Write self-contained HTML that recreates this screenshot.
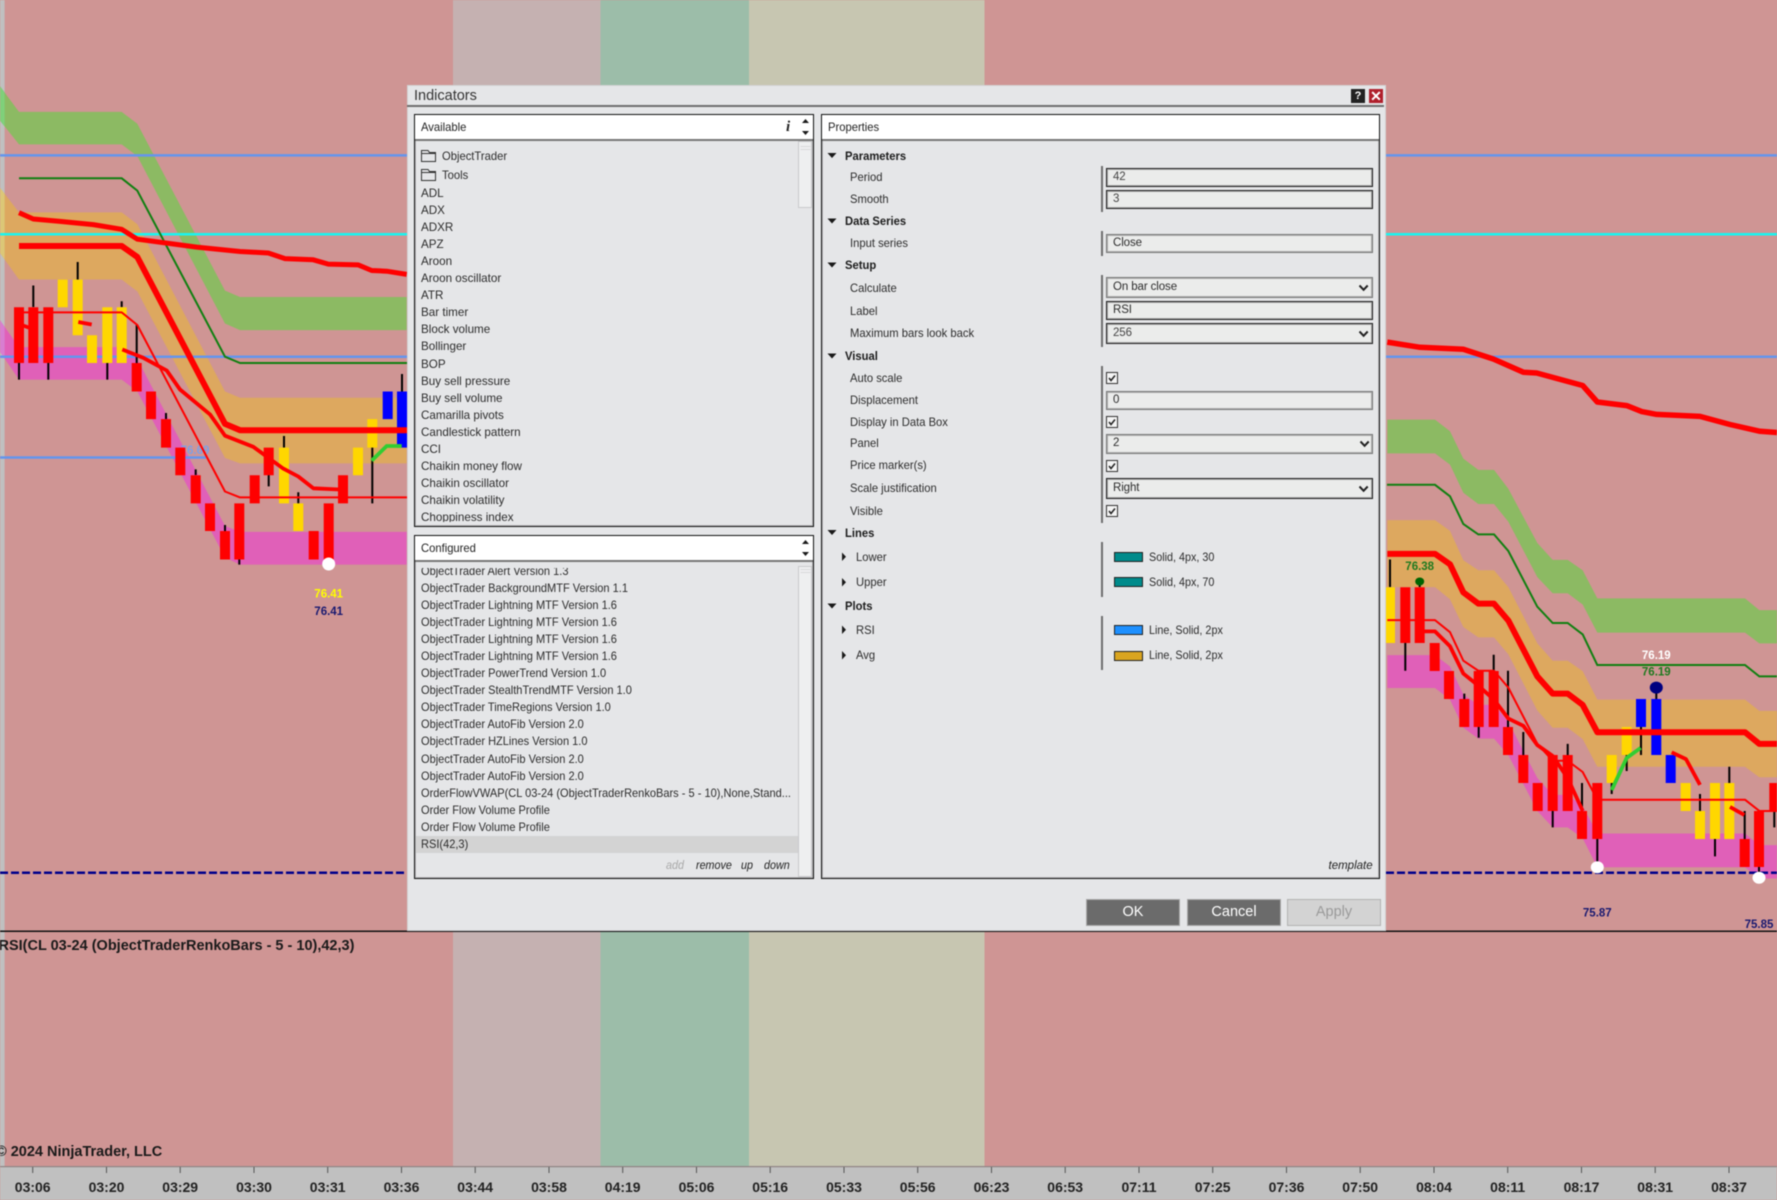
<!DOCTYPE html>
<html lang="en"><head><meta charset="utf-8"><title>Indicators</title>
<style>
html,body{margin:0;padding:0}
body{width:1777px;height:1200px;overflow:hidden;position:relative;background:#cf9594;font-family:"Liberation Sans",sans-serif}
#r{position:absolute;left:0;top:0;width:1777px;height:1200px;filter:blur(.4px)}
svg.c{position:absolute;left:0;top:0}
#d{position:absolute;left:407px;top:85px;width:979px;height:846px;background:#e5e6e8;box-shadow:inset 0 0 0 1px #d2d2d4}
#d *{box-sizing:border-box}
.t{position:absolute;line-height:16px;font-size:12px;color:#2c2c2c;white-space:nowrap;transform:scaleX(.935);transform-origin:0 50%}
.b{font-weight:bold;color:#1c1c1c}
.p{position:absolute;border:1px solid #111;box-shadow:inset 0 0 0 1px rgba(0,0,0,.2)}
.h{position:absolute;left:0;top:0;right:0;height:26px;background:#fff;border-bottom:2px solid #777}
.l{position:absolute;left:14px;font-size:12px;line-height:17.1px;color:#2c2c2c;white-space:nowrap;transform-origin:0 0}
.w{position:absolute;overflow:hidden}
.sb{position:absolute;background:#eeeff0;border:1px solid #c9c9cc}
.i{position:absolute;left:699px;width:267px;background:#ebeceb;border:1px solid #1e1e1e;box-shadow:inset 0 0 0 1px rgba(0,0,0,.28);font-size:11.5px;letter-spacing:-.1px;color:#444;padding-left:6px;white-space:nowrap}
.g{border-color:#777;box-shadow:inset 0 0 0 1px rgba(100,100,100,.45);color:#2c2c2c}
.s{position:absolute;left:694px;width:2px;background:#6e6e6e}
.k{position:absolute;left:707px;top:0;width:29px;height:10px;border:1px solid #222}
.btn{position:absolute;top:814px;height:27px;width:94px;background:#6b6b6b;border:1px solid #a8a8a8;color:#fff;font-size:14.5px;line-height:25px;text-align:center}
.it{font-style:italic;font-size:11.5px}
</style></head><body>
<div id="r">
<svg class="c" width="1777" height="1200" viewBox="0 0 1777 1200">
<rect x="0" y="0" width="1777" height="1167" fill="#cf9594"/>
<rect x="453" y="0" width="147.5" height="1167" fill="#c5b1b1"/>
<rect x="600.5" y="0" width="148.5" height="1167" fill="#9cbda9"/>
<rect x="749" y="0" width="235.5" height="1167" fill="#c7c6b1"/>
<rect x="0" y="0" width="4.6" height="1167" fill="#c0c0c0"/>

<g transform="scale(.33333,.39541)">
<polygon fill="#8cba63" points="0,218 57,283 365,283 412,313 675,735 720,751 1220,751 1220,835 720,835 675,818 412,395 365,365 57,365 0,305"/>
<polygon fill="#7fd07a" points="0,218 14,234 14,320 0,305"/>
<polygon fill="#dda85f" points="0,475 57,537 365,537 412,567 675,990 720,1006 1220,1006 1220,1172 720,1172 675,1158 412,737 365,707 57,707 0,640"/>
<polygon fill="#dcc777" points="0,475 14,490 14,656 0,640"/>
<polygon fill="#e060b8" points="0,810 57,878 365,878 412,908 675,1330 720,1345 1220,1345 1220,1428 720,1428 675,1410 412,990 365,960 57,960 0,890"/>
<polygon fill="#d87ed0" points="0,810 14,827 14,907 0,890"/>
</g>
<g transform="translate(1380,320) scale(.33333,.40177)">
<polygon fill="#8cba63" points="22,248 165,248 210,277 250,345 295,373 342,373 385,420 472,555 518,597 563,597 608,623 652,693 1095,693 1138,722 1191,722 1191,805 1138,805 1095,778 652,778 608,708 563,680 518,680 472,640 385,502 342,458 295,458 250,430 210,360 165,332 22,332"/>
<polygon fill="#dda85f" points="22,498 165,498 210,525 250,598 295,623 342,623 385,665 472,805 518,848 563,848 608,874 652,945 1095,945 1138,973 1191,973 1191,1138 1138,1138 1095,1112 652,1112 608,1043 563,1015 518,1015 472,972 385,832 342,790 295,790 250,764 210,695 165,665 22,665"/>
<polygon fill="#e060b8" points="22,834 165,834 210,862 250,932 295,958 342,958 385,1000 472,1140 518,1182 563,1182 608,1210 652,1278 1095,1278 1138,1307 1191,1307 1191,1390 1138,1390 1095,1362 652,1362 608,1290 563,1263 518,1263 472,1222 385,1083 342,1042 295,1042 250,1015 210,945 165,916 22,916"/>
</g>

<g fill="none">
<path d="M0 155.4H1777M0 356.7H1777M0 457.5H206" stroke="#6495ed" stroke-width="2.5"/>
<path d="M0 234.2H1777" stroke="#19f5f0" stroke-width="2.5"/>
<path d="M0 872.7H1777" stroke="#00008b" stroke-width="2.5" stroke-dasharray="8 3"/>
<path d="M19 178.3H121.7L137.3 190.6 225 356.7 240 363H407" stroke="#118011" stroke-width="2"/>
<path d="M1387 484.8H1435L1450 496.3 1463.3 523.9 1478.3 534.4H1494L1508.3 551 1537.3 606.7 1552.7 623H1567.7L1582.7 634.4 1597.3 665H1745L1759.3 676.4H1777" stroke="#118011" stroke-width="2"/>
</g>
<text x="195" y="454" font-family="'Liberation Sans',sans-serif" font-weight="bold" font-size="11.5" text-anchor="middle" fill="#7f9fe4">76.69</text>

<path fill="none" stroke="#000" stroke-width="2" d="M19 363V379.6M33.3 285.5V307M48.3 363V379.6M77.7 262V279.6M107.3 363V379.6M121.7 301.3V307M136.7 325V363M166 413V419M195.7 469.4V475M225 525V531M239.3 559V564.6M268.7 475V486.4M284 436V447.6M298.3 492.3V503.4M372.3 447V503.4M402 374V391.5M1390 559.5V587M1405.3 643V670.7M1419.7 580V587M1464.3 693.6V699M1478.7 727V737.8M1493.7 654.7V671M1508 670.7V727M1523.3 732V755M1552.7 811V827.4M1567.7 743.9V755M1582 783V811M1597.3 839V862.4M1611.7 783V794M1626.7 755V771M1641 727V755M1656.3 690V699M1700 794V811M1715 839V856.4M1729.3 766.8V783M1744.7 811V839M1759 867V873M1774.3 811V827.4"/>

<path fill="#ff0000" d="M14 307.2h10V363h-10zM28.3 307.2h10V363h-10zM43.3 307.2h10V363h-10zM131.7 363h10v28.5h-10zM146 391.5h10v27.6h-10zM161 419.1h10v28.5h-10zM175.3 447.6h10v27.7h-10zM190.7 475.3h10v28.1h-10zM205 503.4h10V531h-10zM220 531h10v28.5h-10zM234.3 503.4h10v56.1h-10zM249.7 475.3h10v28.1h-10zM263.7 447.6h10v27.7h-10zM308.7 531h10v28.5h-10zM323.7 503.4h10v56.1h-10zM338 475.3h10v28.1h-10zM1400.3 587.2h10V643h-10zM1414.7 587.2h10V643h-10zM1429.7 643h10v28h-10zM1444 671h10v28h-10zM1459.3 699h10v28h-10zM1473.7 671h10v56h-10zM1488.7 671h10v56h-10zM1503 727h10v28h-10zM1518.3 755h10v28h-10zM1532.7 783h10v28h-10zM1547.7 755h10v56h-10zM1562.7 755h10v56h-10zM1577 811h10v28h-10zM1592.3 783h10v56h-10zM1739.7 839h10v28h-10zM1754 811h10v56h-10zM1769.3 783h10v28h-10z"/>
<path fill="#ffd700" d="M57.7 279.6h10v27.6h-10zM72.7 279.6h10v55.7h-10zM87 335.3h10V363h-10zM102.3 307.2h10V363h-10zM116.7 307.2h10V363h-10zM279 447.6h10v55.8h-10zM293.3 503.4h10V531h-10zM353 447.6h10v27.7h-10zM367.3 419.1h10v28.5h-10zM1385 587.2h10V643h-10zM1606.7 755h10v28h-10zM1621.7 727h10v28h-10zM1680.7 783h10v28h-10zM1695 811h10v28h-10zM1710 783h10v56h-10zM1724.3 783h10v56h-10z"/>
<path fill="#0000ff" d="M382.7 391.5h10v27.6h-10zM397 391.5h10v56.1h-10zM1636 699h10v28h-10zM1651.3 699h10v56h-10zM1665.7 755h10v28h-10z"/>

<g fill="none" stroke="#ff0000" stroke-linejoin="round">
<path stroke-width="6" d="M19 246H121.7L137.3 257 225 423.9 240 430.2H407"/>
<path stroke-width="5" d="M19 212.7 33.3 219 60 221.4 93.3 224.6 121.7 229.3 137.3 239.2 196.7 247.1 240 251.5 268.3 253 285 258.6 313.3 259.8 328.3 264.1 358.3 264.9 371.7 270.5 386.7 271.2 406.7 274.4"/>
<path stroke-width="5.5" d="M1387.3 342.1 1420 347.3 1463.3 349.3 1493.3 359 1523.3 372.2 1536.7 373 1582.7 385.5 1597.3 402 1626.7 405.6 1641.7 411.6 1656.7 414.4 1700 416.4 1730 424.5 1760 431.3 1777 432.5"/>
<path stroke-width="2" d="M19 312.4H121.7L137.3 325 225 491.5 240 497.4H407"/>
<path stroke-width="3.8" d="M23 325.5 30 328M78.3 322 91.7 324.5M122.3 349.5 143.3 357.8 166.7 370.5 180 389.5 210 414.4 225 435.7 253.3 446.8 283.3 468.6 298.3 476.5 313.3 488.3 340 489.5"/>
</g>
<g transform="translate(1380,320) scale(.33333,.40177)" fill="none" stroke="#ff0000" stroke-linejoin="round">
<path vector-effect="non-scaling-stroke" stroke-width="6" d="M22 582H165L210 608 250 678 295 706H342L385 748 472 887 518 930H563L608 958 652 1026H1095L1138 1055H1191"/>
<path vector-effect="non-scaling-stroke" stroke-width="2" d="M22 747H165L210 777 250 848 295 873H342L385 915 472 1055 518 1097H563L608 1125 652 1194H1095L1138 1222H1191"/>
<path vector-effect="non-scaling-stroke" stroke-width="3.8" d="M120 775H165L210 812 250 880 295 910 342 945 385 992 430 1010 472 1058 518 1085 563 1140 608 1222M875 1076 918 1093 960 1157M1050 1212 1093 1232"/>
<path vector-effect="non-scaling-stroke" stroke-width="3.8" stroke="#32cd32" d="M695 1170 740 1090 782 1065"/>
</g>
<path fill="none" stroke="#32cd32" stroke-width="3.8" d="M371.7 460.6 386.7 446H401.7"/>

<ellipse cx="328.7" cy="564" rx="6.5" ry="6.5" fill="#fff"/>
<ellipse cx="1597.3" cy="867.2" rx="6.5" ry="6" fill="#fff"/>
<ellipse cx="1759" cy="877.7" rx="6.5" ry="6" fill="#fff"/>
<ellipse cx="1419.7" cy="581.5" rx="4.5" ry="4" fill="#006400"/>
<ellipse cx="1656.3" cy="687.6" rx="6.5" ry="6" fill="#000080"/>

<g font-family="'Liberation Sans',sans-serif" font-weight="bold" font-size="11.5" text-anchor="middle">
<text x="328.7" y="597.5" fill="#ffff00">76.41</text>
<text x="328.7" y="614.8" fill="#191970">76.41</text>
<text x="1419.7" y="570" fill="#1f7a1f">76.38</text>
<text x="1656.3" y="659" fill="#ffffff">76.19</text>
<text x="1656.3" y="675.6" fill="#1f7a1f">76.19</text>
<text x="1597.3" y="916.7" fill="#191970">75.87</text>
<text x="1759" y="928" fill="#191970">75.85</text>
</g>

<rect x="0" y="930.5" width="1777" height="1.5" fill="#111"/>
<g font-family="'Liberation Sans',sans-serif" font-weight="bold" font-size="14.5" fill="#1a1a1a">
<text x="-1.5" y="950">RSI(CL 03-24 (ObjectTraderRenkoBars - 5 - 10),42,3)</text>
<text x="-4" y="1156">© 2024 NinjaTrader, LLC</text>
</g>

<rect x="0" y="1167" width="1777" height="33" fill="#c0c0c0"/>
<rect x="0" y="1166" width="1777" height="1.2" fill="#8f8484"/>
<path stroke="#555" stroke-width="1" d="M32.7 1167v6M106.5 1167v6M180.2 1167v6M254 1167v6M327.7 1167v6M401.5 1167v6M475.2 1167v6M549 1167v6M622.7 1167v6M696.5 1167v6M770.2 1167v6M844 1167v6M917.7 1167v6M991.5 1167v6M1065.2 1167v6M1139 1167v6M1212.7 1167v6M1286.5 1167v6M1360.2 1167v6M1434 1167v6M1507.7 1167v6M1581.5 1167v6M1655.2 1167v6M1729 1167v6"/>
<g font-family="'Liberation Sans',sans-serif" font-weight="bold" font-size="14" fill="#222" text-anchor="middle">
<text x="32.7" y="1192">03:06</text><text x="106.5" y="1192">03:20</text><text x="180.2" y="1192">03:29</text><text x="254" y="1192">03:30</text><text x="327.7" y="1192">03:31</text><text x="401.5" y="1192">03:36</text><text x="475.2" y="1192">03:44</text><text x="549" y="1192">03:58</text><text x="622.7" y="1192">04:19</text><text x="696.5" y="1192">05:06</text><text x="770.2" y="1192">05:16</text><text x="844" y="1192">05:33</text><text x="917.7" y="1192">05:56</text><text x="991.5" y="1192">06:23</text><text x="1065.2" y="1192">06:53</text><text x="1139" y="1192">07:11</text><text x="1212.7" y="1192">07:25</text><text x="1286.5" y="1192">07:36</text><text x="1360.2" y="1192">07:50</text><text x="1434" y="1192">08:04</text><text x="1507.7" y="1192">08:11</text><text x="1581.5" y="1192">08:17</text><text x="1655.2" y="1192">08:31</text><text x="1729" y="1192">08:37</text>
</g>
</svg>

<div id="d">
<div class="t" style="left:7px;top:3px;font-size:14.5px;color:#333;transform:none">Indicators</div>
<div style="position:absolute;left:0;top:20px;width:977px;height:2px;background:#6e6e6e"></div>
<div style="position:absolute;left:944px;top:4px;width:14px;height:14px;background:#222;color:#fff;font:bold 11px/14px 'Liberation Sans',sans-serif;text-align:center">?</div>
<div style="position:absolute;left:962px;top:4px;width:14px;height:14px;background:#b0202c;color:#fff;font:bold 14px/14px 'Liberation Sans',sans-serif;text-align:center">✕</div>

<div class="p" style="left:7px;top:29px;width:400px;height:413px">
<div class="h"></div>
<div class="t" style="left:6px;top:4px;color:#222">Available</div>
<div class="t" style="left:371px;top:4px;font:italic bold 15px/16px 'Liberation Serif',serif;color:#222;transform:none">i</div>
<div class="sb" style="left:383px;top:26px;width:14px;height:67px"></div>
</div>
<div class="t" style="left:35px;top:63px">ObjectTrader</div>
<div class="t" style="left:35px;top:82px">Tools</div>
<div class="w" style="left:0;top:56px;width:400px;height:381px"><div class="l" style="top:43.6px;transform:scaleX(.97)">ADL<br>ADX<br>ADXR<br>APZ<br>Aroon<br>Aroon oscillator<br>ATR<br>Bar timer<br>Block volume<br>Bollinger<br>BOP<br>Buy sell pressure<br>Buy sell volume<br>Camarilla pivots<br>Candlestick pattern<br>CCI<br>Chaikin money flow<br>Chaikin oscillator<br>Chaikin volatility<br>Choppiness index</div></div>

<div class="p" style="left:7px;top:450px;width:400px;height:344px">
<div class="h"></div>
<div class="t" style="left:6px;top:4px;color:#222">Configured</div>
<div style="position:absolute;left:1px;top:300px;width:382px;height:17px;background:#d3d3d3"></div>
<div class="sb" style="left:383px;top:30px;width:14px;height:311px"></div>
</div>
<div class="w" style="left:0;top:483px;width:400px;height:285px"><div class="l" style="top:-5.5px;transform:scaleX(.92)">ObjectTrader Alert Version 1.3<br>ObjectTrader BackgroundMTF Version 1.1<br>ObjectTrader Lightning MTF Version 1.6<br>ObjectTrader Lightning MTF Version 1.6<br>ObjectTrader Lightning MTF Version 1.6<br>ObjectTrader Lightning MTF Version 1.6<br>ObjectTrader PowerTrend Version 1.0<br>ObjectTrader StealthTrendMTF Version 1.0<br>ObjectTrader TimeRegions Version 1.0<br>ObjectTrader AutoFib Version 2.0<br>ObjectTrader HZLines Version 1.0<br>ObjectTrader AutoFib Version 2.0<br>ObjectTrader AutoFib Version 2.0<br>OrderFlowVWAP(CL 03-24 (ObjectTraderRenkoBars - 5 - 10),None,Stand...<br>Order Flow Volume Profile<br>Order Flow Volume Profile<br>RSI(42,3)</div></div>
<div class="t it" style="left:259px;top:773px;color:#a8a8a8">add</div>
<div class="t it" style="left:288.5px;top:773px;color:#222">remove</div>
<div class="t it" style="left:334px;top:773px;color:#222">up</div>
<div class="t it" style="left:357px;top:773px;color:#222">down</div>

<div class="p" style="left:414px;top:29px;width:559px;height:765px">
<div class="h"></div>
<div class="t" style="left:6px;top:4px;color:#222">Properties</div>
</div>

<div class="t b" style="left:438px;top:63px">Parameters</div>
<div class="t" style="left:443px;top:84px">Period</div>
<div class="t" style="left:443px;top:106px">Smooth</div>
<div class="t b" style="left:438px;top:128px">Data Series</div>
<div class="t" style="left:443px;top:150px">Input series</div>
<div class="t b" style="left:438px;top:172px">Setup</div>
<div class="t" style="left:443px;top:195px">Calculate</div>
<div class="t" style="left:443px;top:218px">Label</div>
<div class="t" style="left:443px;top:240px">Maximum bars look back</div>
<div class="t b" style="left:438px;top:263px">Visual</div>
<div class="t" style="left:443px;top:285px">Auto scale</div>
<div class="t" style="left:443px;top:307px">Displacement</div>
<div class="t" style="left:443px;top:329px">Display in Data Box</div>
<div class="t" style="left:443px;top:350px">Panel</div>
<div class="t" style="left:443px;top:372px">Price marker(s)</div>
<div class="t" style="left:443px;top:395px">Scale justification</div>
<div class="t" style="left:443px;top:418px">Visible</div>
<div class="t b" style="left:438px;top:440px">Lines</div>
<div class="t" style="left:449px;top:464px">Lower</div>
<div class="t" style="left:449px;top:489px">Upper</div>
<div class="t b" style="left:438px;top:513px">Plots</div>
<div class="t" style="left:449px;top:537px">RSI</div>
<div class="t" style="left:449px;top:562px">Avg</div>

<div class="s" style="top:81px;height:46px"></div>
<div class="s" style="top:146px;height:25px"></div>
<div class="s" style="top:190px;height:72px"></div>
<div class="s" style="top:281px;height:157px"></div>
<div class="s" style="top:457px;height:55px"></div>
<div class="s" style="top:531px;height:54px"></div>

<div class="i" style="top:83px;height:19px;line-height:16px">42</div>
<div class="i" style="top:105px;height:19px;line-height:16px">3</div>
<div class="i g" style="top:149px;height:19px;line-height:16px">Close</div>
<div class="i g" style="top:192px;height:21px;line-height:18px">On bar close</div>
<div class="i" style="top:216px;height:19px;line-height:16px;color:#2c2c2c">RSI</div>
<div class="i" style="top:238px;height:21px;line-height:18px">256</div>
<div class="i g" style="top:306px;height:19px;line-height:16px">0</div>
<div class="i g" style="top:349px;height:20px;line-height:17px">2</div>
<div class="i" style="top:393px;height:21px;line-height:18px;color:#2c2c2c">Right</div>

<div class="k" style="top:467px;background:#008b8b"></div>
<div class="k" style="top:492px;background:#008b8b"></div>
<div class="k" style="top:540px;background:#1e90ff"></div>
<div class="k" style="top:566px;background:#daa520"></div>
<div class="t" style="left:742px;top:464px;transform:scaleX(.9)">Solid, 4px, 30</div>
<div class="t" style="left:742px;top:489px;transform:scaleX(.9)">Solid, 4px, 70</div>
<div class="t" style="left:742px;top:537px;transform:scaleX(.9)">Line, Solid, 2px</div>
<div class="t" style="left:742px;top:562px;transform:scaleX(.9)">Line, Solid, 2px</div>

<div class="t it" style="left:921.5px;top:773px;color:#222;transform:none">template</div>

<div class="btn" style="left:679px">OK</div>
<div class="btn" style="left:780px">Cancel</div>
<div class="btn" style="left:880px;background:#d3d3d3;border-color:#b2b2b2;color:#9a9a9a">Apply</div>
</div>

<svg class="c" width="1777" height="1200" viewBox="0 0 1777 1200" style="pointer-events:none">
<g fill="none" stroke="#333" stroke-width="1">
<path d="M421.5 161.5V150.5H428L429.5 152.5H435.5V161.5ZM421.5 153.5H435.5"/>
<path d="M421.5 180.5V169.5H428L429.5 171.5H435.5V180.5ZM421.5 172.5H435.5"/>
</g>
<g fill="#1a1a1a">
<path d="M802 123 805.5 119 809 123ZM802 131 805.5 135 809 131ZM802 544 805.5 540 809 544ZM802 552 805.5 556 809 552Z"/>
<path d="M827.5 153H836.5L832 158ZM827.5 218.5H836.5L832 223.5ZM827.5 262.5H836.5L832 267.5ZM827.5 353.5H836.5L832 358.5ZM827.5 530H836.5L832 535ZM827.5 603.5H836.5L832 608.5Z"/>
<path d="M842 552.5 846 556.7 842 561ZM842 578 846 582.3 842 586.5ZM842 625.5 846 629.7 842 634ZM842 651 846 655.3 842 659.5Z"/>
</g>
<path fill="none" stroke="#d8d8da" stroke-width="1" d="M800.5 146.5H810.5M800.5 149.5H810.5M800.5 569.5H810.5M800.5 572.5H810.5"/>
<g fill="none" stroke="#222" stroke-width="2">
<path d="M1359.5 285.5 1363.6 289.8 1367.7 285.5M1359.5 331.5 1363.6 335.8 1367.7 331.5M1360.5 441.5 1364.6 445.8 1368.7 441.5M1359.5 486.5 1363.6 490.8 1367.7 486.5"/>
</g>
<g fill="#f4f4f4" stroke="#333" stroke-width="1">
<rect x="1106.5" y="372.5" width="11" height="11"/>
<rect x="1106.5" y="416.5" width="11" height="11"/>
<rect x="1106.5" y="460.5" width="11" height="11"/>
<rect x="1106.5" y="505.5" width="11" height="11"/>
</g>
<g fill="none" stroke="#222" stroke-width="1.5">
<path d="M1109 378 1111 380.5 1115 375.5M1109 422 1111 424.5 1115 419.5M1109 466 1111 468.5 1115 463.5M1109 511 1111 513.5 1115 508.5"/>
</g>
</svg>
</div>
</body></html>
